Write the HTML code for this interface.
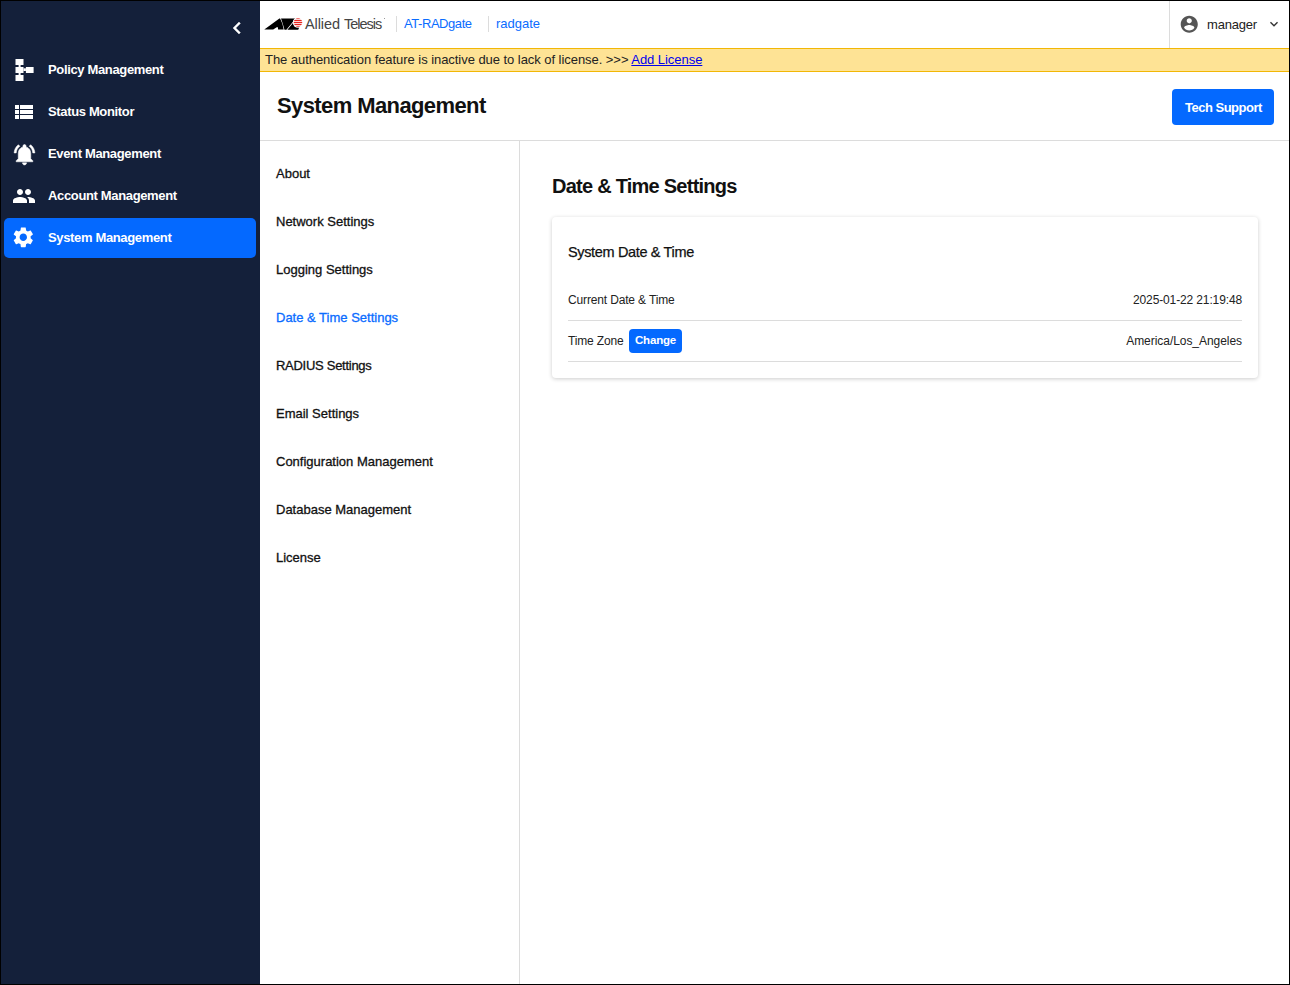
<!DOCTYPE html>
<html><head><meta charset="utf-8">
<style>
*{box-sizing:border-box;margin:0;padding:0}
html,body{width:1290px;height:985px;overflow:hidden;background:#000}
body{font-family:"Liberation Sans",sans-serif;position:relative}
.a{position:absolute;white-space:nowrap}
#bg{position:absolute;left:1px;top:1px;width:1288px;height:983px;background:#fff}
#side{position:absolute;left:1px;top:1px;width:259px;height:983px;background:#14203a}
.nav{position:absolute;color:#fff;font-weight:bold;font-size:13px;left:48px;letter-spacing:-0.35px}
#active{position:absolute;left:4px;top:218px;width:252px;height:40px;border-radius:5px;background:#0469ff}
#banner{position:absolute;left:260px;top:48px;width:1029px;height:24px;background:#fee395;border-top:1px solid #f2b705;border-bottom:1px solid #f2b705}
.t13{font-size:13px}
#tech{position:absolute;left:1172px;top:89px;width:102px;height:36px;background:#0469ff;border-radius:4px}
.si{position:absolute;left:276px;font-size:13px;color:#111;-webkit-text-stroke:0.3px currentColor}
.sep{position:absolute;background:#dcdcdc}
#card{position:absolute;left:552px;top:217px;width:706px;height:161px;background:#fff;border-radius:4px;box-shadow:0 1px 4px rgba(0,0,0,.2)}
</style></head><body>
<div id="bg"></div>
<div id="side"></div>
<!-- collapse chevron -->
<svg class="a" style="left:224.5px;top:16px" width="24" height="24" viewBox="0 0 24 24"><path fill="#fff" stroke="#fff" stroke-width="0.4" d="M15.41 7.41L14 6l-6 6 6 6 1.41-1.41L10.83 12z"/></svg>

<!-- sidebar icons -->
<svg class="a" style="left:0;top:0" width="40" height="260" viewBox="0 0 40 260">
  <g fill="#fff">
    <rect x="15.5" y="59" width="8" height="6"/>
    <rect x="18.6" y="65" width="2" height="2"/>
    <rect x="15.5" y="67" width="8" height="6"/>
    <rect x="23.5" y="68.3" width="2.4" height="2.7"/>
    <rect x="25.9" y="67" width="7.7" height="6"/>
    <rect x="18.6" y="73" width="2" height="2"/>
    <rect x="15.5" y="75" width="8" height="6"/>
  </g>
</svg>
<svg class="a" style="left:12px;top:100px" width="24" height="24" viewBox="0 0 24 24"><path fill="#fff" d="M3 14h4v-4H3v4zm0 5h4v-4H3v4zM3 9h4V5H3v4zm5 5h13v-4H8v4zm0 5h13v-4H8v4zM8 5v4h13V5H8z"/></svg>
<svg class="a" style="left:11.5px;top:141.6px" width="25" height="25" viewBox="0 0 24 24"><path fill="#fff" stroke="#fff" stroke-width="0.5" d="M7.58 4.08L6.15 2.65C3.75 4.48 2.17 7.3 2.03 10.5h2c.15-2.65 1.51-4.97 3.55-6.42zm12.39 6.42h2c-.15-3.2-1.73-6.02-4.12-7.85l-1.42 1.43c2.02 1.45 3.39 3.77 3.54 6.42zM18 11c0-3.07-1.64-5.64-4.5-6.32V4c0-.83-.67-1.5-1.5-1.5s-1.5.67-1.5 1.5v.68C7.63 5.36 6 7.92 6 11v5l-2 2v1h16v-1l-2-2v-5zm-6 11c.14 0 .27-.01.4-.04.65-.14 1.18-.58 1.44-1.18.1-.24.15-.5.15-.78h-4c.01 1.1.9 2 2.01 2z"/></svg>
<svg class="a" style="left:12.4px;top:184px" width="24" height="24" viewBox="0 0 24 24"><path fill="#fff" d="M16 11c1.66 0 2.99-1.34 2.99-3S17.66 5 16 5c-1.66 0-3 1.34-3 3s1.34 3 3 3zm-8 0c1.66 0 2.99-1.34 2.99-3S9.66 5 8 5C6.34 5 5 6.34 5 8s1.34 3 3 3zm0 2c-2.33 0-7 1.17-7 3.5V19h14v-2.5c0-2.33-4.67-3.5-7-3.5zm8 0c-.29 0-.62.02-.97.05 1.16.84 1.97 1.97 1.97 3.45V19h6v-2.5c0-2.33-4.67-3.5-7-3.5z"/></svg>

<div id="active"></div>
<svg class="a" style="left:11.4px;top:225.3px" width="24.6" height="24.6" viewBox="0 0 24 24"><path fill="#fff" d="M19.14 12.94c.04-.3.06-.61.06-.94 0-.32-.02-.64-.07-.94l2.03-1.58c.18-.14.23-.41.12-.61l-1.92-3.32c-.12-.22-.37-.29-.59-.22l-2.390.96c-.5-.38-1.03-.7-1.62-.94l-.36-2.54c-.04-.24-.24-.41-.48-.41h-3.84c-.24 0-.43.17-.47.41l-.36 2.54c-.59.24-1.13.57-1.62.94l-2.39-.96c-.22-.08-.47 0-.59.22L2.74 8.87c-.12.21-.08.47.12.61l2.03 1.580c-.05.3-.09.63-.09.94s.02.64.07.94l-2.03 1.58c-.18.14-.23.41-.12.61l1.92 3.32c.12.22.37.29.59.22l2.39-.96c.5.38 1.03.7 1.62.94l.36 2.54c.05.24.24.41.48.41h3.84c.24 0 .44-.17.47-.41l.36-2.54c.59-.24 1.13-.56 1.62-.94l2.39.96c.22.08.47 0 .59-.22l1.92-3.32c.12-.22.07-.47-.12-.61l-2.01-1.58zM12 15.6c-1.98 0-3.6-1.620-3.6-3.6s1.62-3.6 3.6-3.6 3.6 1.62 3.6 3.6-1.62 3.6-3.6 3.6z"/></svg>

<div class="nav a" style="top:62px">Policy Management</div>
<div class="nav a" style="top:104px">Status Monitor</div>
<div class="nav a" style="top:146px">Event Management</div>
<div class="nav a" style="top:188px">Account Management</div>
<div class="nav a" style="top:230px">System Management</div>

<!-- header -->
<svg class="a" style="left:262px;top:12px" width="50" height="24" viewBox="262 12 50 24">
  <g fill="#000">
    <polygon points="264.3,29.6 279.4,18.4 280.1,18.4 282.3,23.6 283.7,29.6 278.1,29.6 277.9,27.3 276.7,27.3 273.2,29.6"/>
    <polygon points="281,18.4 295.3,18.4 293,21.7 286.4,29.8 284.5,29.8 282.7,23.6"/>
    <polygon points="287.4,29.8 293.6,22.2 296.1,24.8 299.2,27.5 298.2,29.8"/>
  </g>
  <circle cx="298" cy="22.5" r="5.2" fill="#fff"/>
  <clipPath id="cc"><circle cx="298" cy="22.5" r="4.2"/></clipPath>
  <g clip-path="url(#cc)" fill="#e8251f">
    <rect x="293" y="18" width="10" height="0.9"/>
    <rect x="293" y="19.8" width="10" height="1.2"/>
    <rect x="293" y="21.8" width="10" height="1.3"/>
    <rect x="293" y="23.9" width="10" height="1.2"/>
    <rect x="293" y="25.9" width="10" height="1.2"/>
  </g>
</svg>
<div class="a" style="left:305px;top:16px;font-size:14.5px;color:#444;letter-spacing:-0.1px">Allied</div>
<div class="a" style="left:344px;top:16px;font-size:14.5px;color:#444;letter-spacing:-1px">Telesis</div>
<div class="a" style="left:384px;top:18px;width:1px;height:1px;background:#999"></div>
<div class="sep" style="left:396px;top:16px;width:1px;height:16px"></div>
<div class="a t13" style="left:404px;top:16px;color:#0a6cff;letter-spacing:-0.44px">AT-RADgate</div>
<div class="sep" style="left:488px;top:16px;width:1px;height:16px"></div>
<div class="a t13" style="left:496px;top:16px;color:#0a6cff">radgate</div>
<div class="sep" style="left:1169px;top:1px;width:1px;height:47px"></div>
<svg class="a" style="left:1178.6px;top:14.4px" width="20.5" height="20.5" viewBox="0 0 24 24"><path fill="#555" d="M12 2C6.48 2 2 6.48 2 12s4.48 10 10 10 10-4.48 10-10S17.52 2 12 2zm0 3c1.66 0 3 1.34 3 3s-1.34 3-3 3-3-1.34-3-3 1.34-3 3-3zm0 14.2c-2.5 0-4.71-1.28-6-3.22.03-1.99 4-3.08 6-3.08 1.99 0 5.970 1.09 6 3.08-1.29 1.94-3.5 3.22-6 3.22z"/></svg>
<div class="a t13" style="left:1207px;top:17px;color:#222;letter-spacing:-0.2px">manager</div>
<svg class="a" style="left:1266px;top:16px" width="16" height="16" viewBox="0 0 24 24"><path fill="#333" d="M16.59 8.59L12 13.17 7.41 8.59 6 10l6 6 6-6z"/></svg>

<div id="banner"></div>
<div class="a t13" style="left:265px;top:52px;color:#222;letter-spacing:-0.05px">The authentication feature is inactive due to lack of license. &gt;&gt;&gt; <span style="color:#0000ee;text-decoration:underline">Add License</span></div>

<!-- title -->
<div class="a" style="left:277px;top:93px;font-size:22px;font-weight:bold;color:#111;letter-spacing:-0.6px">System Management</div>
<div id="tech"></div>
<div class="a" style="left:1185px;top:100px;font-size:13px;font-weight:bold;color:#fff;letter-spacing:-0.5px">Tech Support</div>
<div class="sep" style="left:260px;top:140px;width:1029px;height:1px"></div>

<!-- subnav -->
<div class="sep" style="left:519px;top:141px;width:1px;height:843px"></div>
<div class="si a" style="top:166px">About</div>
<div class="si a" style="top:214px">Network Settings</div>
<div class="si a" style="top:262px">Logging Settings</div>
<div class="si a" style="top:310px;color:#0a6cff">Date &amp; Time Settings</div>
<div class="si a" style="top:358px;letter-spacing:-0.28px">RADIUS Settings</div>
<div class="si a" style="top:406px">Email Settings</div>
<div class="si a" style="top:454px">Configuration Management</div>
<div class="si a" style="top:502px">Database Management</div>
<div class="si a" style="top:550px">License</div>

<!-- content -->
<div class="a" style="left:552px;top:175px;font-size:20px;font-weight:bold;color:#111;letter-spacing:-0.75px">Date &amp; Time Settings</div>
<div id="card"></div>
<div class="a" style="left:568px;top:244px;font-size:14.5px;color:#111;letter-spacing:-0.35px;-webkit-text-stroke:0.25px #111">System Date &amp; Time</div>
<div class="a" style="left:568px;top:293px;font-size:12px;color:#222;letter-spacing:-0.15px">Current Date &amp; Time</div>
<div class="a" style="right:48px;top:293px;font-size:12px;color:#222;letter-spacing:-0.13px">2025-01-22 21:19:48</div>
<div class="sep" style="left:568px;top:320px;width:674px;height:1px"></div>
<div class="a" style="left:568px;top:334px;font-size:12px;color:#222;letter-spacing:-0.15px">Time Zone</div>
<div class="a" style="left:629px;top:329px;width:53px;height:24px;background:#0469ff;border-radius:4px"></div>
<div class="a" style="left:635px;top:334px;font-size:11.5px;font-weight:bold;color:#fff;letter-spacing:-0.2px">Change</div>
<div class="a" style="right:48px;top:334px;font-size:12px;color:#222;letter-spacing:-0.05px">America/Los_Angeles</div>
<div class="sep" style="left:568px;top:361px;width:674px;height:1px"></div>
</body></html>
